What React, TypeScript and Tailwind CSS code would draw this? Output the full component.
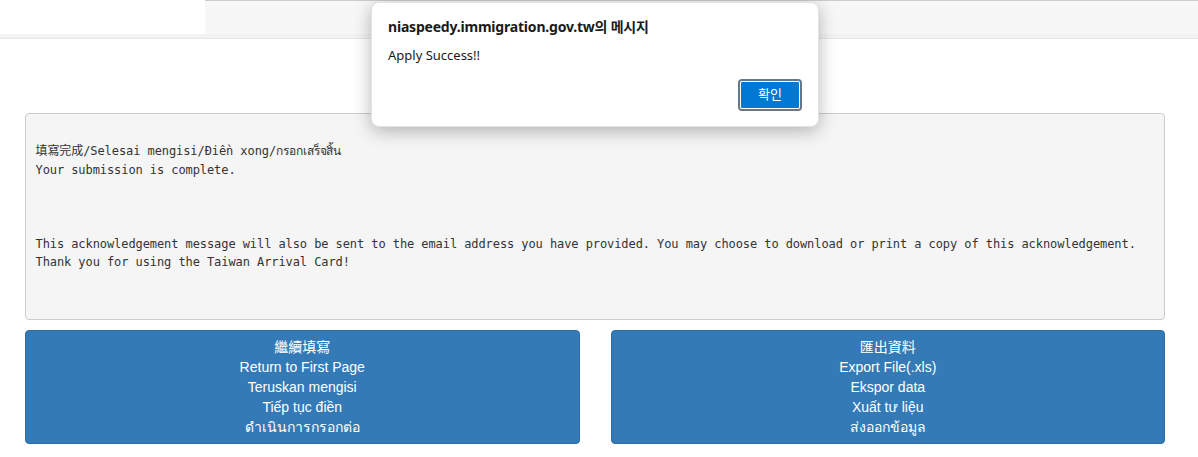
import React from "react";

const preLines = [
  "",
  "填寫完成/Selesai mengisi/Điền xong/กรอกเสร็จสิ้น",
  "Your submission is complete.",
  "",
  "",
  "",
  "This acknowledgement message will also be sent to the email address you have provided. You may choose to download or print a copy of this acknowledgement.",
  "Thank you for using the Taiwan Arrival Card!",
  "",
  "",
];

const buttons = [
  ["繼續填寫", "Return to First Page", "Teruskan mengisi", "Tiếp tục điền", "ดำเนินการกรอกต่อ"],
  ["匯出資料", "Export File(.xls)", "Ekspor data", "Xuất tư liệu", "ส่งออกข้อมูล"],
];

export default function App() {
  return (
    <div className="relative w-[1198px] h-[457px] overflow-hidden bg-white font-['Liberation_Sans','Noto_Sans_CJK_TC',sans-serif] text-[14px] text-[#333]">
      {/* top navbar strip */}
      <div className="flex h-[34px]">
        <div className="w-[205px] bg-white" />
        <div className="flex-1 bg-[#f7f7f7] border-t border-[#cccccc]" />
      </div>
      <div className="h-[5px] bg-[#f3f3f3] border-b border-[#e6e6e6]" />

      <div className="ml-[25px] w-[1140px] mt-[74px]">
        {/* acknowledgement pre block */}
        <div className="rounded-[4px] border border-[#cccccc] bg-[#f5f5f5] p-[9.5px] font-['DejaVu_Sans_Mono','Noto_Sans_CJK_TC','Noto_Sans',monospace] text-[12px] tracking-[-0.08px] text-[#333]">
          {preLines.map((line, i) => (
            <div key={i} className="h-[18.57px] leading-[18.57px] whitespace-pre">
              {line}
            </div>
          ))}
        </div>

        {/* action buttons */}
        <div className="mt-[10px] grid grid-cols-2 gap-[31px]">
          {buttons.map((lines, i) => (
            <div
              key={i}
              className="rounded-[4px] border border-[#2e6da4] bg-[#337ab7] px-3 py-[6px] text-center text-white leading-[20px]"
            >
              {lines.map((t) => (
                <div key={t}>{t}</div>
              ))}
            </div>
          ))}
        </div>
      </div>

      {/* browser alert dialog */}
      <div className="absolute left-[371px] top-[2px] w-[448px] h-[125px] rounded-[8px] bg-white shadow-[0_4px_18px_rgba(0,0,0,0.28)] border border-[#e3e3e3] px-[16px] pt-[14px] font-['Noto_Sans','Noto_Sans_CJK_KR',sans-serif] text-[#1a1a1a]">
        <div className="text-[14px] font-bold leading-[20px] tracking-[-0.2px]">
          niaspeedy.immigration.gov.tw의 메시지
        </div>
        <div className="mt-[8px] text-[13px] leading-[20px]">Apply Success!!</div>
        <div className="mt-[14px] flex justify-end">
          <div className="w-[64px] h-[32px] rounded-[4px] border-2 border-[#667788] p-0">
            <div className="flex h-full items-center justify-center rounded-[2px] border border-white bg-[#0078d4] text-[13px] text-white">
              확인
            </div>
          </div>
        </div>
      </div>
    </div>
  );
}
